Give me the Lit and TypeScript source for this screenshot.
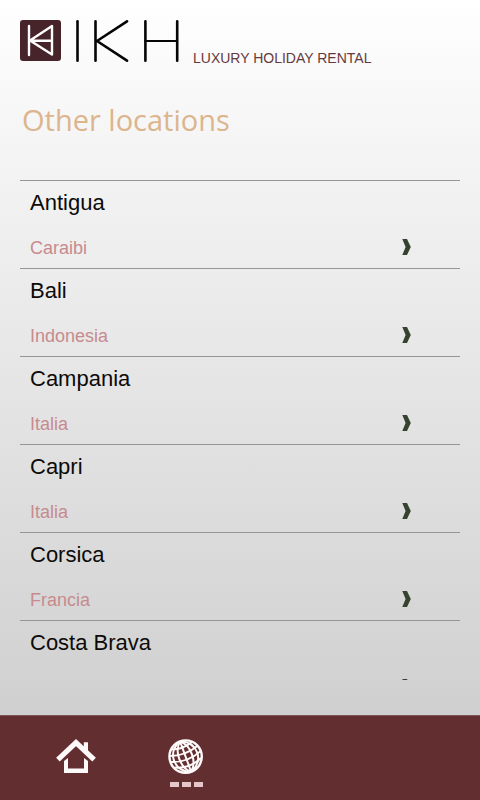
import { LitElement, html, css, nothing } from "lit";
import { customElement, property } from "lit/decorators.js";

interface Place {
  name: string;
  country?: string;
}

const PLACES: Place[] = [
  { name: "Antigua", country: "Caraibi" },
  { name: "Bali", country: "Indonesia" },
  { name: "Campania", country: "Italia" },
  { name: "Capri", country: "Italia" },
  { name: "Corsica", country: "Francia" },
  { name: "Costa Brava" },
];

@customElement("brand-header")
class BrandHeader extends LitElement {
  static styles = css`
    :host {
      display: flex;
      align-items: flex-end;
      gap: 11px;
      padding: 20px 20px 0;
    }
    .logo {
      display: block;
      flex: none;
    }
    .tagline {
      font-size: 14px;
      line-height: 16px;
      color: #66393c;
      white-space: nowrap;
    }
  `;

  render() {
    return html`
      <svg class="logo" width="162" height="46" viewBox="0 0 162 46" role="img" aria-label="IKH">
        <rect width="41" height="41" rx="3" fill="#47232a" />
        <g fill="none" stroke="#fff" stroke-width="2.4" stroke-linecap="round" stroke-linejoin="round">
          <path d="M9 6V35" />
          <path d="M10 20.5L32 6V34.5ZM10 20.8H32" />
        </g>
        <g fill="none" stroke="#050505" stroke-width="2.6" stroke-linecap="round" stroke-linejoin="round">
          <path d="M57.5 1.3V40.7" />
          <path d="M75.5 1.3V40.7M107 1.3L77 21L107 40.7" />
          <path d="M125.4 1.3V40.7M157.2 1.3V40.7" />
          <path d="M125.4 21H157.2" stroke-width="2" />
        </g>
      </svg>
      <span class="tagline">LUXURY HOLIDAY RENTAL</span>
    `;
  }
}

@customElement("place-row")
class PlaceRow extends LitElement {
  @property({ attribute: false }) place!: Place;

  static styles = css`
    :host {
      display: block;
      border-top: 1px solid #979599;
    }
    .link {
      display: grid;
      grid-template-rows: 45px 42px;
      grid-template-columns: 1fr auto;
      align-items: center;
      padding: 0 49px 0 10px;
      color: #0c0b08;
      text-decoration: none;
    }
    .name {
      grid-column: 1 / -1;
      align-self: start;
      padding-top: 9px;
      font-size: 22px;
      line-height: 26px;
    }
    .country {
      padding-top: 2px;
      font-size: 18px;
      line-height: 22px;
      color: #c78b8f;
    }
    .arrow {
      display: block;
      grid-column: 2;
    }
  `;

  render() {
    const { name, country } = this.place;
    return html`
      <a class="link" href="#">
        <span class="name">${name}</span>
        ${country ? html`<span class="country">${country}</span>` : nothing}
        <svg class="arrow" width="9" height="16" viewBox="0 0 9 16" aria-hidden="true">
          <path d="M0.3 0H5L8.8 8L5 16H0.3L3.6 8Z" fill="#34432f" />
        </svg>
      </a>
    `;
  }
}

@customElement("tab-bar")
class TabBar extends LitElement {
  static styles = css`
    :host {
      display: block;
      flex: none;
      background: #632e30;
      border-top: 1px solid #7d5556;
    }
    .tabs {
      display: flex;
      gap: 30px;
      padding: 23px 36px 11px;
    }
    .tab {
      display: flex;
      flex-direction: column;
      align-items: center;
      gap: 7px;
      width: 80px;
      height: 50px;
      padding: 0;
      border: 0;
      background: none;
    }
    .marks {
      display: flex;
      gap: 3px;
    }
    .mark {
      width: 9px;
      height: 5px;
      background: #e5c7c9;
    }
  `;

  render() {
    return html`
      <nav class="tabs">
        <button class="tab" aria-label="Home">
          <svg width="40" height="36" viewBox="0 0 40 36" aria-hidden="true">
            <path d="M1.9 20.6L20 3.6L38.1 20.6" fill="none" stroke="#fffafa" stroke-width="5.2" />
            <path d="M27.8 3.3H32V15L27.8 11Z" fill="#fffafa" />
            <path d="M8 22L12 19V29.6H28V19L32 22V33.9H8Z" fill="#fffafa" />
          </svg>
        </button>
        <button class="tab" aria-label="Locations" aria-current="page">
          <svg width="36" height="36" viewBox="0 0 36 36" aria-hidden="true">
            <g fill="none" stroke="#fffafa" stroke-width="2">
              <circle cx="17.6" cy="17.6" r="16.2" stroke-width="2.4" />
              <g transform="rotate(-20 17.6 17.6) translate(-0.4 -0.4)">
                <path d="M18 2V34" />
                <path d="M18 2C9 9 9 27 18 34M18 2C27 9 27 27 18 34" />
                <path d="M17 2C2 9 2 27 17 34M19 2C34 9 34 27 19 34" />
                <path d="M7 6.5Q18 10.5 29 6.5M3 12Q18 17.5 33 12M2 18Q18 24.5 34 18M4 24.5Q18 31 32 24.5" />
              </g>
            </g>
          </svg>
          <span class="marks">
            <span class="mark"></span><span class="mark"></span><span class="mark"></span>
          </span>
        </button>
      </nav>
    `;
  }
}

@customElement("app-root")
class AppRoot extends LitElement {
  static styles = css`
    :host {
      display: flex;
      flex-direction: column;
      height: 100vh;
      font-family: "Liberation Sans", Arial, sans-serif;
      background: linear-gradient(#ffffff, #fafafa 8%, #cacaca);
    }
    .title {
      margin: 0;
      padding: 34px 22px 40px;
      font-family: "Trebuchet MS", "Open Sans", sans-serif;
      font-size: 29px;
      font-weight: 400;
      line-height: 40px;
      color: #dcb58d;
    }
    .list {
      flex: 1;
      min-height: 0;
      overflow: hidden;
      margin: 0 20px 35px;
    }
  `;

  render() {
    return html`
      <brand-header></brand-header>
      <h1 class="title">Other locations</h1>
      <main class="list">
        ${PLACES.map((place) => html`<place-row .place=${place}></place-row>`)}
      </main>
      <tab-bar></tab-bar>
    `;
  }
}
